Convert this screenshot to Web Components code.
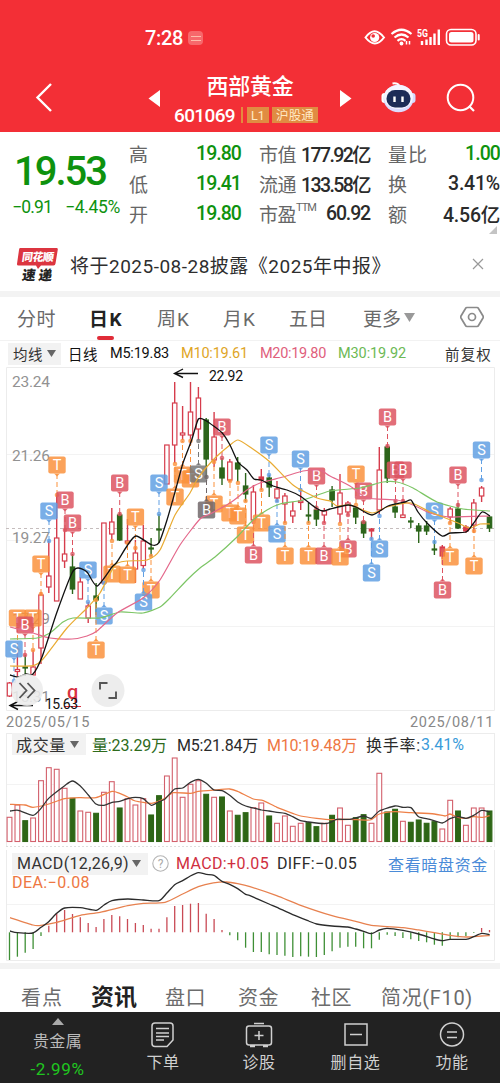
<!DOCTYPE html>
<html lang="zh-CN">
<head>
  <meta charset="UTF-8">
  <title>西部黄金 601069</title>
  <style>
    body {
      margin: 0;
      width: 500px;
      height: 1083px;
      overflow: hidden;
      background: #fff;
      color: #2b2b2b;
      font-family: Roboto, "Noto Sans CJK SC", sans-serif;
      display: flex;
      flex-direction: column;
    }

    .split {
      height: 6px;
      background: #f3f3f3;
      flex: none;
    }
  </style>
</head>
<body>
  <stock-header></stock-header>
  <quote-board></quote-board>
  <notice-bar><fit-text w="321">将于2025-08-28披露《2025年中报》</fit-text></notice-bar>
  <div class="split"></div>
  <period-tabs></period-tabs>
  <ma-legend></ma-legend>
  <kline-chart></kline-chart>
  <volume-chart></volume-chart>
  <macd-chart></macd-chart>
  <div class="split"></div>
  <info-tabs></info-tabs>
  <bottom-bar></bottom-bar>

  <script>
    // 共用：建立 shadow root
    class Base extends HTMLElement {
      connectedCallback() {
        if (this.shadowRoot) return;
        this.attachShadow({ mode: 'open' });
        this.shadowRoot.innerHTML = this.render();
      }
    }

    // 顶部状态栏 + 标题
    class StockHeader extends Base {
      render() {
        return `
          <style>
            :host { display: block; height: 132px; flex: none; background: #f32f36; color: #fff; }
            .status { height: 58px; padding: 18px 19px 0 145px; box-sizing: border-box; display: flex; align-items: center; }
            .time { font-size: 20px; font-weight: 500; }
            .pill { width: 15px; height: 14px; border-radius: 4px; background: #f7686b; margin-left: 5px; display: flex; align-items: center; justify-content: center; }
            .pill i { width: 10px; height: 3px; border-top: 1px solid #fba; border-bottom: 1px solid #fba; }
            .icons { margin-left: auto; display: block; }
            .nav { display: grid; grid-template-columns: 145px 20px 170px 20px 145px; height: 74px; box-sizing: border-box; padding-top: 5px; align-items: center; }
            .nav svg { display: block; }
            .mid { text-align: center; padding-top: 6px; }
            .name { font-size: 22px; line-height: 28px; font-weight: 500; padding-top: 1px; }
            .code { display: flex; align-items: center; padding-left: 9px; height: 29px; }
            .code fit-text { font-size: 19px; font-weight: 500; }
            .bar { width: 2px; height: 16px; background: #e58a3e; margin: 0 4px 0 6px; }
            .tag { background: #e08c42; color: #ffe9c4; height: 16px; line-height: 16px; padding: 0 4px; margin-right: 3px; }
            .code .tag fit-text { font-size: 12.5px; font-weight: 400; }
          </style>
          <div class="status">
            <fit-text class="time" w="38">7:28</fit-text>
            <span class="pill"><i></i></span>
            <svg class="icons" width="117" height="22" viewBox="364 27 117 22" fill="none" stroke="#fff">
              <path d="M365.5 37.5q9-12.5 18.500 0q-9 12-18.500 0z" stroke-width="2"/>
              <circle cx="374.700" cy="37.500" r="4.600" fill="#fff" stroke="none"/><circle cx="373.200" cy="36" r="1.800" fill="#f32f36" stroke="none"/>
              <path d="M391.500 34q10-8.500 20 0M394.500 37.500q7-6 14 0M397.500 40.800q4-3.500 8 0" stroke-width="2.200"/>
              <circle cx="401.500" cy="43.500" r="1.900" fill="#fff" stroke="none"/>
              <path d="M406.500 41v3.500M409.500 41v3.500" stroke-width="1.500"/>
              <text x="417" y="37" font-size="10" font-weight="700" fill="#fff" stroke="none" textLength="11" lengthAdjust="spacingAndGlyphs">5G</text>
              <path d="M422 41v4M426.500 39.500v5.500M430.500 37v8M434.500 33.500v11.500M438.800 29.500v15.500" stroke-width="2.400"/>
              <rect x="446.500" y="29.500" width="29.500" height="15.500" rx="4.500" stroke-width="1.600"/>
              <rect x="449" y="32" width="24.500" height="10.500" rx="2.500" fill="#fff" stroke="none"/>
              <path d="M478.700 35v4.500" stroke-width="2" stroke-linecap="round"/>
            </svg>
          </div>
          <div class="nav">
            <svg width="60" height="40" viewBox="0 78 60 40"><path d="M51 84L37.500 97.500L51 111" fill="none" stroke="#fff" stroke-width="2.400"/></svg>
            <svg width="20" height="20" viewBox="145 87 20 20"><path d="M160 89v17l-11.500-8.500z" fill="#fff"/></svg>
            <div class="mid">
              <div class="name"><fit-text w="87">西部黄金</fit-text></div>
              <div class="code">
                <fit-text w="61">601069</fit-text><span class="bar"></span>
                <span class="tag"><fit-text w="14">L1</fit-text></span>
                <span class="tag"><fit-text w="38">沪股通</fit-text></span>
              </div>
            </div>
            <svg width="20" height="20" viewBox="335 87 20 20"><path d="M340 89v17l11.500-8.500z" fill="#fff"/></svg>
            <svg width="145" height="44" viewBox="355 76 145 44">
              <path d="M392.500 83.500q5-1 7 2.500" fill="none" stroke="#fff" stroke-width="1.800"/>
              <rect x="381.500" y="93" width="6" height="10" rx="3" fill="#fff"/><rect x="409.500" y="93" width="6" height="10" rx="3" fill="#d4dcff"/>
              <ellipse cx="398.500" cy="98.500" rx="15" ry="13.700" fill="#dcdcff"/><ellipse cx="398.500" cy="97" rx="14.500" ry="12" fill="#f5f5ff"/>
              <rect x="386.500" y="90" width="24" height="17.500" rx="8.500" fill="#1d2c57"/>
              <path d="M394.500 96.500v5.500M402.500 96.500v5.500" stroke="#fff" stroke-width="2.400"/>
              <circle cx="460.500" cy="97.500" r="12.800" fill="none" stroke="#fff" stroke-width="2"/>
              <path d="M469 106l5 5" stroke="#fff" stroke-width="2.200"/>
            </svg>
          </div>`;
      }
    }

    // 报价区
    class QuoteBoard extends Base {
      render() {
        return `
          <style>
            :host { display: grid; grid-template-columns: 129px 112px 18px 111px 18px 112px; height: 107px; flex: none; box-sizing: border-box; padding-top: 6px; }
            .g { color: #0e920e; }
            .last { padding: 10px 0 0 14px; font-size: 40px; line-height: 47px; font-weight: 500; }
            .chg { display: flex; gap: 13px; padding-left: 12px; line-height: 20px; font-size: 17.500px; margin-top: 2px; }
            .col { display: grid; grid-auto-rows: 30px; }
            .col div { display: flex; justify-content: space-between; align-items: center; font-size: 19px; color: #666; }
            .col b { font-weight: 500; color: #2b2b2b; font-size: 19.500px; }
            .col b.g { color: #0e920e; }
            sup { font-size: 11px; align-self: flex-start; margin: 4px auto 0 0; line-height: 12px; }
            .tri { position: relative; }
            .tri svg { position: absolute; right: 3px; bottom: 5px; }
          </style>
          <div class="g">
            <div class="last"><fit-text w="92">19.53</fit-text></div>
            <div class="chg"><fit-text w="40">−0.91</fit-text><fit-text w="55">−4.45%</fit-text></div>
          </div>
          <div class="col">
            <div>高<b class="g"><fit-text w="45">19.80</fit-text></b></div>
            <div>低<b class="g"><fit-text w="45">19.41</fit-text></b></div>
            <div>开<b class="g"><fit-text w="45">19.80</fit-text></b></div>
          </div>
          <span></span>
          <div class="col">
            <div><fit-text w="37">市值</fit-text><b><fit-text w="69">177.92亿</fit-text></b></div>
            <div><fit-text w="37">流通</fit-text><b><fit-text w="69">133.58亿</fit-text></b></div>
            <div><fit-text w="37">市盈</fit-text><sup><fit-text w="20">TTM</fit-text></sup><b><fit-text w="44">60.92</fit-text></b></div>
          </div>
          <span></span>
          <div class="col tri">
            <div><fit-text w="40">量比</fit-text><b class="g"><fit-text w="35">1.00</fit-text></b></div>
            <div>换<b><fit-text w="52">3.41%</fit-text></b></div>
            <div>额<b><fit-text w="57">4.56亿</fit-text></b></div>
            <svg width="8" height="8"><path d="M8 0v8H0z" fill="#c4c4c4"/></svg>
          </div>`;
      }
    }

    // 公告条
    class NoticeBar extends Base {
      render() {
        return `
          <style>
            :host { display: flex; align-items: center; height: 52px; flex: none; font-size: 19px; color: #2e2e2e; padding: 0 16px 2px 16px; box-sizing: border-box; }
            .logo { width: 43px; margin-right: 11px; display: block; overflow: visible; }
            .x { margin-left: auto; }
          </style>
          <svg class="logo" height="40" viewBox="16 245 43 40">
            <path d="M20 249h36.500q1.500 0 1.300 1.500l-2.300 14q-.300 2-2 2H41l-3 3.500l-2-3.500H18.500q-1.700 0-1.500-1.500l2-14q.200-2 1-2z" fill="#dc3540"/>
            <g font-family="Noto Sans CJK SC" font-weight="900">
              <text transform="translate(21.500 262) skewX(-8)" font-size="11" fill="#fff" textLength="32">同花顺</text>
              <text transform="translate(21.500 281) skewX(-8)" font-size="13.500" fill="#222" textLength="30">速递</text>
            </g>
          </svg>
          <slot></slot>
          <svg class="x" width="12" height="12"><path d="M1 1l10 10M11 1L1 11" stroke="#999" stroke-width="1.200"/></svg>`;
      }
    }

    // 周期切换
    class PeriodTabs extends Base {
      render() {
        return `
          <style>
            :host { display: flex; align-items: center; height: 44px; flex: none; font-size: 19px; color: #6a6a6a; padding: 0 16px 3px 17px; border-bottom: 1px solid #f2f2f2; box-sizing: border-box; }
            .on { font-weight: 700; color: #222; position: relative; margin: 0 34px 0 33px; }
            .on i { position: absolute; left: 8px; bottom: -9px; width: 17px; height: 4px; border-radius: 2px; background: #e02c38; }
            .k { margin-right: 33px; }
            .dn { margin-left: 3px; }
            .set { margin-left: auto; }
          </style>
          <fit-text w="39">分时</fit-text>
          <span class="on"><fit-text w="34">日K</fit-text><i></i></span>
          <fit-text class="k" w="33">周K</fit-text>
          <fit-text class="k" w="33">月K</fit-text>
          <fit-text w="38" style="margin-right:36px">五日</fit-text>
          <fit-text w="38">更多</fit-text>
          <svg class="dn" width="11" height="9"><path d="M0 0h11L5.500 9z" fill="#999"/></svg>
          <svg class="set" width="24" height="22" viewBox="0 0 24 22" fill="none" stroke="#8a8a8a" stroke-width="1.700"><path d="M7 1.500h10q1 0 1.500 1L23 10q.500 1 0 2l-4.500 7.500q-.500 1-1.500 1H7q-1 0-1.500-1L1 12q-.500-1 0-2l4.500-7.500q.500-1 1.500-1z"/><circle cx="12" cy="11" r="3.500"/></svg>`;
      }
    }

    class MaLegend extends Base {
      render() {
        return `
          <style>
            :host { display: flex; align-items: center; height: 26px; flex: none; font-size: 14.500px; color: #333; padding: 0 8px 1px; box-sizing: border-box; }
            .sel { background: #f2f2f2; height: 22px; width: 53px; box-sizing: border-box; padding: 0 5px; display: flex; align-items: center; justify-content: space-between; margin-right: 7px; }
            .m { margin-left: 12px; font-size: 14.500px; }
            .r { margin-left: auto; }
          </style>
          <span class="sel"><fit-text w="30">均线</fit-text><svg width="9" height="7"><path d="M0 0h9L4.500 7z" fill="#666"/></svg></span>
          <fit-text w="30" style="color:#111">日线</fit-text>
          <fit-text class="m" w="59" style="color:#111">M5:19.83</fit-text>
          <fit-text class="m" w="67" style="color:#e0a526">M10:19.61</fit-text>
          <fit-text class="m" w="66" style="color:#e0607c">M20:19.80</fit-text>
          <fit-text class="m" w="68" style="color:#6cb955">M30:19.92</fit-text>
          <fit-text class="r" w="47">前复权</fit-text>`;
      }
    }

    const RED = '#d63c4c';
    const GREEN = '#2c651b';
    const barX = i => +(9.5 + 7.869 * i).toFixed(1);

    // 平滑折线
    function curve(str, color, width = 1.2) {
      const p = str.trim().split(/\s+/).map(s => s.split(',').map(Number));
      let d = `M${p[0]}`;
      for (let i = 0; i < p.length - 1; i++) {
        const a = p[i - 1] || p[i], b = p[i], c = p[i + 1], e = p[i + 2] || c;
        const k = 9;
        d += `C${b[0] + (c[0] - a[0]) / k} ${b[1] + (c[1] - a[1]) / k} ${c[0] - (e[0] - b[0]) / k} ${c[1] - (e[1] - b[1]) / k} ${c[0]} ${c[1]}`;
      }
      return `<path d="${d}" fill="none" stroke="${color}" stroke-width="${width}"/>`;
    }

    // 最高, 实体上, 实体下, 最低, 颜色 (r 空心红 / g 绿 / f 实心红)
    const candles = `682,683,696,697,r 648,669.5,671.5,676,r 655,667,668,676,g 650,667,675,676,r 592,595,648,664,r
      541,576,587,593,r 495,538,601,601,r 528,554,561,568,r 554,567,589,594,g 577,582,599,599,r
      602,606,618,623,r 583,596,600,615,g 523,523,583,583,r 508,522,534,540,r 512,515,540,541,g
      519,541,543,544,r 540,553,569,583,r 525,541,565.5,569,r 538,548,549,556,g 514,529,530,543,g
      445,445,484,484,r 382,403,445,463,r 406,433,435,440,r 382,412,435,445,r 387,398,429,440,r
      418,420,459,477,g 412,437,460,467,r 458,468,478,485,g 459,462,480,482,r 457,463,469,482,g
      473,486,494,502,g 485,492,520,521,r 469,477,480,490,f 475,478,487,497,g 481,489,498,502,r
      493,496,504,523,r 502,511,516,523,r 488,501,502.500,510,r 503,515,516,523,g 505,510,519,526,g
      508,511,515,523,r 486,490,500,507,g 474,493,514,523,r 501,503,512,515,r 507,508,517,524,g
      520,522,533,538,g 528,529,531,540,f 447,470,510,515,r 445,447,478,483,g 500,507,512,518,g
      499,515,517.5,518,r 517,521,522,528,g 523,526,531,543,g 521,526,531,535,g 540,549,550,555,g
      545,547,556,559,f 507,509,517,523,r 503,509,528,529,g 525,527,531,533,f 499,503,525,533,r
      486,488,496,502,r 516,517,528,532,g`.split(/\s+/).map(s => s.split(','));

    // 字母, x, y, 引线终点 y
    const marks = `T,57,465,495 B,65,500,530 B,72.500,523,554 S,49,511,541 B,119.700,483,514 S,159,483,514
      T,135.400,517,548 T,41,564,594 T,17.500,618,650 T,33,618,650 B,25,625,655 S,14,649,681 S,88,570,602
      T,112,574,541 T,127.500,575,543 T,151,590,556 S,143.500,602,570 S,104,616,583 T,96,650,600
      T,175,497,464 T,182.500,475,441 T,190.500,479,441 X,198.500,474,441 T,214,504,462 Y,206.500,510,477
      T,230,513,481 T,238,516,483 T,245.500,535,501 B,253.500,555,522 T,261.500,523,490 S,277,534,501
      T,285,556,523 T,308.500,556,523 B,324,556,523 B,222,427,458 S,269,445,475 S,300.500,459,490
      B,316.500,476,508 T,356,474,505 B,363.500,491,522 B,387.500,417,446 B,395.500,470,501 B,403,470,501
      S,434.500,511,542 B,458,475,505 S,481.500,450,480 B,348,549,515 T,340,557,524 S,379.500,549,516
      S,371.500,573,539 T,450,557,523 B,442.500,590,550 T,474,566,531`.split(/\s+/).map(s => s.split(','));

    const markColor = { B: '#dd5360', S: '#609fe3', T: '#fb913b', X: '#777777', Y: '#6f6668' };

    class KlineChart extends Base {
      candle([h, t, b, l, c], i) {
        const x = barX(i), col = c === 'g' ? GREEN : RED;
        const fill = c === 'r' ? '#fff' : col;
        return `<path d="M${x} ${h}V${l}" stroke="${col}" stroke-width="1.400"/>
          <rect x="${x - 2.2}" y="${t}" width="4.400" height="${Math.max(b - t, 0.8)}" fill="${fill}" stroke="${col}" stroke-width="1.200"/>`;
      }

      mark([k, x, y, end]) {
        x = +x; y = +y; end = +end;
        const s = end > y ? 1 : -1, col = markColor[k];
        const letter = k === 'X' ? 'S' : k === 'Y' ? 'B' : k;
        return `<path d="M${x} ${y + 9 * s}V${end}" stroke="${col}" stroke-width="1" stroke-dasharray="5 3"/>
          <circle cx="${x}" cy="${end}" r="2.300" fill="${col}" opacity=".8"/>
          <g opacity=".84"><rect x="${x - 8.7}" y="${y - 8.5}" width="17.400" height="17" rx="2" fill="${col}"/>
          <path d="M${x - 3} ${y + 8.5 * s}h6l-3 ${3 * s}z" fill="${col}"/></g>
          <text x="${x}" y="${y + 5.2}" font-size="14.500" fill="#fff" text-anchor="middle">${letter}</text>`;
      }

      render() {
        return `
          <style>
            :host { display: block; height: 366px; flex: none; }
            svg { display: block; }
            .dates { display: flex; justify-content: space-between; padding: 1px 6px 0; font-size: 14.500px; line-height: 21px; height: 22px; box-sizing: border-box; color: #888; }
          </style>
          <svg width="500" height="344" viewBox="0 367 500 344">
            <path d="M6 454.500H494M6 540.500H494M6 626.500H494" stroke="#f3f3f3"/>
            <path d="M6.500 367.500H494.500V710.500H6.500z" fill="none" stroke="#ececec"/>
            <path d="M6 528.500H494" stroke="#c5bdbd" stroke-dasharray="3 3"/>
            <g font-size="15.500" fill="#929292">
              <text x="12" y="387" textLength="38">23.24</text><text x="12" y="461" textLength="38">21.26</text>
              <text x="12" y="543" textLength="38">19.27</text><text x="12" y="624" textLength="38">17.29</text>
              <text x="12" y="702" textLength="38">15.31</text>
            </g>
            ${candles.map((c, i) => this.candle(c, i)).join('')}
            ${marks.map(m => this.mark(m)).join('')}
            ${curve('10,639 37,638 50,633 63,622 73,618 100,618 120,612 143,613 160,607 170,598 187,580 200,568 215,557 237,537 253,520 267,510 280,504 303,500 330,491 360,488 383,482 397,482 413,488 437,502 463,509 490,511', '#7cc565')}
            ${curve('10,627 33,633 50,638 72,639 87,636 97,631 117,613 143,598 160,580 180,545 200,519 210,514 230,503 247,490 260,483 283,477 303,471 320,470 330,476 350,486 367,498 397,500 413,505 430,513 450,517 490,516', '#e4688b')}
            ${curve('10,666 33,665.7 43,659 67,628 87,608 100,593 115,565 127,561 147,560 160,550 175,515 190,493 198,478 213,460 230,445 238,440 250,447 270,462 293,485 317,498 330,501 337,506 350,505 372,513 387,507 411,503 430,512 443,517 458,523 470,528 480,524 490,524', '#e9ab32')}
            ${curve('10,675 18,677 26,674 33,674 42,657 57,612 72,573 78,568 87,572 97,586 112,567 117,562 127,546 136,536 152,545 159,542.7 167,520 175,492 183,463 191.700,440 198.400,419 206,420.700 222,432.700 230,445 238,462 247,470 254,479 261,480 273,486 287,490 300,496 316,508 323,511 330,509 348,505 356,507 372,515 388,506 405,502 411,500 418,512 427,523 442,536 450,533 466,532 473,524 482,512 490,516', '#111', 1.3)}
            <g fill="none" stroke="#111" stroke-width="1.400">
              <path d="M198 373.500H175M183 369l-8.500 4.500l8.500 4"/>
              <path d="M33 705.500H10M18 701.500l-8 4l8 4"/>
            </g>
            <text x="67" y="699" font-size="20" font-weight="500" fill="#d8323f">q</text>
            <path d="M64 706.500h17" stroke="#d8323f"/>
            <circle cx="27" cy="690" r="16" fill="#ececec" opacity=".88"/>
            <path d="M19.500 683l7 7.500l-7 7.500M27.500 683l7 7.500l-7 7.500" fill="none" stroke="#555" stroke-width="1.800"/>
            <circle cx="108" cy="690.500" r="16.500" fill="#ececec" opacity=".93"/>
            <path d="M100 689.500v-6.500h7.500M116 691.500v6.500h-7.500" fill="none" stroke="#555" stroke-width="1.900"/>
            <g font-size="14" fill="#111"><text x="209" y="381" textLength="34">22.92</text><text x="45" y="709" textLength="33">15.63</text></g>
          </svg>
          <div class="dates"><fit-text w="84">2025/05/15</fit-text><fit-text w="84">2025/08/11</fit-text></div>`;
      }
    }

    // 副图共用样式：图与图例叠放在同一格
    const subStyle = `
      :host { display: grid; flex: none; }
      :host > * { grid-area: 1 / 1; }
      svg { display: block; }
      .row { display: flex; align-items: center; height: 22px; font-size: 16px; }
      .sel { background: #f2f2f2; height: 22px; box-sizing: border-box; display: flex; align-items: center; justify-content: space-between; color: #333; }`;

    // 下面两组数据以三分之一像素为单位
    const volumes = `262r 225r 272g 264r 152r 113r 118r 175r 205g 243r 247r 250g 187r 155r 234g 206r 225r 206r 255g 197g
      138r 84r 202r 163r 152r 193g 202r 201g 243r 256g 248g 233r 219r 258g 280r 258r 289r 280r 278g 290g
      280r 256g 234r 286r 263g 254g 280r 130r 246g 238g 274r 277g 270g 280g 275g 297r 211r 243g 286r 234r 234r 243g`.split(/\s+/);

    class VolumeChart extends Base {
      render() {
        const bars = volumes.map((v, i) => {
          const x = barX(i), y = 730 + parseInt(v) / 3, g = v.endsWith('g');
          return `<rect x="${(x - 2.4).toFixed(1)}" y="${y.toFixed(1)}" width="4.800" height="${(841.500 - y).toFixed(1)}" fill="${g ? '#2e6616' : '#fff'}" stroke="${g ? '#2e6616' : '#d3606c'}" stroke-width="1.100"/>`;
        }).join('');
        return `
          <style>
            ${subStyle}
            :host { height: 114px; }
            .row { padding: 0 0 0 12px; }
            .sel { width: 74px; padding: 0 7px 0 4px; margin-right: 6px; }
          </style>
          <svg width="500" height="114" viewBox="0 733 500 114">
            <path d="M6 784.500H494" stroke="#f3f3f3"/>
            <path d="M6.500 733V847M494.500 733V847M6 733.500H494" stroke="#ececec"/>
            <path d="M6 846.500H494" stroke="#ddd" stroke-dasharray="2 2"/>
            ${bars}
            <g transform="translate(0 730) scale(.33333)">
              ${curve('30,223 75,225 99,232 146,222 194,206 241,203 288,203 336,184 359,190 383,201 406,213 454,220 477,213 495,205 520,188 571,190 595,184 642,180 689,177 713,184 760,207 790,212 831,232 878,250 902,258 950,265 996,269 1050,268 1110,270 1138,252 1185,245 1233,248 1303,252 1335,258 1350,252 1374,262 1398,265 1421,260 1450,262 1469,257', '#ee8048', 3.8)}
              ${curve('30,243 55,241 99,256 123,235 146,205 194,167 217,153 241,168 265,195 288,222 312,226 336,217 359,214 383,206 406,202 430,206 454,226 477,215 495,207 524,177 548,174 571,157 595,148 619,160 642,180 666,182 689,196 713,216 737,228 760,234 784,240 807,243 831,247 855,250 878,260 902,272 926,276 972,281 990,278 1010,268 1050,268 1090,258 1114,265 1138,243 1185,228 1209,232 1233,233 1256,260 1290,268 1327,279 1350,266 1374,260 1398,265 1421,256 1445,241 1469,246', '#333', 3.8)}
            </g>
          </svg>
          <div class="row">
            <span class="sel"><fit-text w="50">成交量</fit-text><svg width="9" height="7"><path d="M0 0h9L4.500 7z" fill="#666"/></svg></span>
            <fit-text w="75" style="color:#2e6b1c">量:23.29万</fit-text>
            <fit-text w="81" style="margin-left:10px">M5:21.84万</fit-text>
            <fit-text w="90" style="margin-left:9px;color:#ee7742">M10:19.48万</fit-text>
            <fit-text w="55" style="margin-left:9px">换手率:</fit-text>
            <fit-text w="43" style="color:#3a9bd9">3.41%</fit-text>
          </div>`;
      }
    }

    const macd = `330 320 308 297 258 227 190 180 192 202 219 231 207 195 199 207 219 225 236 236 202 168 165 161 159 191
      207 240 256 271 293 306 306 313 315 317 321 319 320 321 315 304 293 290 290 295 295 269 254 258 264 268 273 277
      284 287 268 262 258 249 234 240`.split(/\s+/).map(Number);

    class MacdChart extends Base {
      render() {
        const bars = macd.map((v, i) => `<path d="M${barX(i)} 932.300V${(850 + v / 3).toFixed(1)}" stroke="${v > 247 ? '#3e8f35' : '#c94a55'}" stroke-width="1.300"/>`).join('');
        return `
          <style>
            ${subStyle}
            :host { height: 116px; }
            .legend { padding: 6px 12px 0; }
            .row { height: 21px; }
            .sel { width: 136px; padding: 0 7px 0 5px; margin-right: 4px; }
            .dea { font-size: 16px; line-height: 17px; color: #ee7742; display: block; }
          </style>
          <svg width="500" height="116" viewBox="0 847 500 116">
            <path d="M6 904.500H494" stroke="#f3f3f3"/>
            <path d="M6.500 850V960.500H494.500V850" fill="none" stroke="#ececec"/>
            ${bars}
            <g transform="translate(0 850) scale(.33333)">
              ${curve('30,203 99,225 123,226 170,217 241,196 300,187 383,167 430,160 495,157 548,132 595,110 640,99 680,96 713,101 750,110 830,137 902,166 996,197 1067,214 1114,226 1209,233 1256,240 1303,248 1350,256 1398,261 1445,258 1469,257', '#e7814f', 3.8)}
              ${curve('30,243 52,248 99,249 123,232 146,215 170,190 194,174 241,173 288,181 312,165 336,152 383,147 430,150 477,152 500,130 524,104 548,92 571,78 595,68 619,73 642,76 666,94 689,103 713,116 737,133 750,137 807,162 831,172 878,194 926,213 950,222 996,228 1043,231 1067,237 1091,244 1114,251 1138,240 1161,235 1209,241 1256,252 1303,267 1327,272 1350,268 1398,268 1421,260 1445,250 1469,254', '#2c2c2c', 4)}
            </g>
          </svg>
          <div class="legend">
            <div class="row">
              <span class="sel"><fit-text w="112">MACD(12,26,9)</fit-text><svg width="9" height="7"><path d="M0 0h9L4.500 7z" fill="#666"/></svg></span>
              <svg width="17" height="17"><circle cx="8.500" cy="8.500" r="7.700" fill="none" stroke="#b5b5b5" stroke-width="1.100"/><text x="8.500" y="13" font-size="12" fill="#aaa" text-anchor="middle">?</text></svg>
              <fit-text w="93" style="margin-left:7px;color:#d02f40">MACD:+0.05</fit-text>
              <fit-text w="80" style="margin-left:8px">DIFF:−0.05</fit-text>
              <fit-text w="100" style="margin-left:auto;color:#4a8bd8">查看暗盘资金</fit-text>
            </div>
            <span class="dea"><fit-text w="78">DEA:−0.08</fit-text></span>
          </div>`;
      }
    }

    // 资讯页签
    class InfoTabs extends Base {
      render() {
        return `
          <style>
            :host { display: flex; align-items: center; height: 43px; flex: none; box-sizing: border-box; padding: 14px 0 0 21px; font-size: 20px; line-height: 28px; color: #6c6c6c; }
            .on { font-size: 23px; font-weight: 700; color: #222; margin: 0 28px; }
            .t { margin-right: 32px; }
          </style>
          <fit-text w="42">看点</fit-text>
          <fit-text class="on" w="46">资讯</fit-text>
          <fit-text class="t" w="41">盘口</fit-text>
          <fit-text class="t" w="41">资金</fit-text>
          <fit-text w="41" style="margin-right:29px">社区</fit-text>
          <fit-text w="92">简况(F10)</fit-text>`;
      }
    }

    // 底部工具栏
    class BottomBar extends Base {
      render() {
        return `
          <style>
            :host { display: grid; grid-template-columns: 115px 96px 96px 97px 96px; height: 71px; flex: none; background: #222; color: #d0d0d0; font-size: 16px; }
            div { display: flex; flex-direction: column; align-items: center; line-height: 22px; }
            div > svg { display: block; margin: 9px 0 4px; fill: none; stroke: #d0d0d0; stroke-width: 1.500; }
            div.idx > svg { margin: 6px 0 6px; fill: #aaa; stroke: none; }
            .idx fit-text { color: #bbb; }
            .idx fit-text.dn { color: #20c620; margin-top: 5px; font-size: 17px; }
          </style>
          <div class="idx"><svg width="12" height="7"><path d="M6 0l6 7H0z"/></svg><fit-text w="49">贵金属</fit-text><fit-text class="dn" w="54">-2.99%</fit-text></div>
          <div><svg width="26" height="27"><path d="M5 2h15q3 0 3 3v14l-6 6.500H5q-3 0-3-3V5q0-3 3-3zM6 7.500h13M6 12h13M6 15.500h13M6 19h8"/></svg><fit-text w="33">下单</fit-text></div>
          <div><svg width="28" height="27"><path d="M9 2.500h10M4 5h20q2.500 0 2.500 2.500v14q0 2.500-2.500 2.500H4q-2.500 0-2.500-2.500v-14Q1.500 5 4 5zM5 25.500h5M18 25.500h5M14 10v9M9.500 14.500h9"/></svg><fit-text w="33">诊股</fit-text></div>
          <div><svg width="26" height="27"><path d="M2 3h22v21H2zM7 13.500h12"/></svg><fit-text w="50">删自选</fit-text></div>
          <div><svg width="26" height="27"><circle cx="13" cy="13.500" r="11.500"/><path d="M8 11h10M8 16.500h10"/></svg><fit-text w="33">功能</fit-text></div>`;
      }
    }

    // 按给定宽度调整字距的文字
    class FitText extends HTMLElement {
      connectedCallback() {
        if (!this.shadowRoot) {
          this.attachShadow({ mode: 'open' }).innerHTML = `<style>:host { display: inline-block; white-space: nowrap; flex: none; }</style><slot></slot>`;
        }
        const w = +this.getAttribute('w');
        const now = this.getBoundingClientRect().width;
        this.style.letterSpacing = (w - now) / this.textContent.length + 'px';
      }
    }

    customElements.define('stock-header', StockHeader);
    customElements.define('quote-board', QuoteBoard);
    customElements.define('notice-bar', NoticeBar);
    customElements.define('period-tabs', PeriodTabs);
    customElements.define('ma-legend', MaLegend);
    customElements.define('kline-chart', KlineChart);
    customElements.define('volume-chart', VolumeChart);
    customElements.define('macd-chart', MacdChart);
    customElements.define('info-tabs', InfoTabs);
    customElements.define('bottom-bar', BottomBar);
    // 最后注册，测量时各组件样式已就绪
    customElements.define('fit-text', FitText);
  </script>
</body>
</html>
